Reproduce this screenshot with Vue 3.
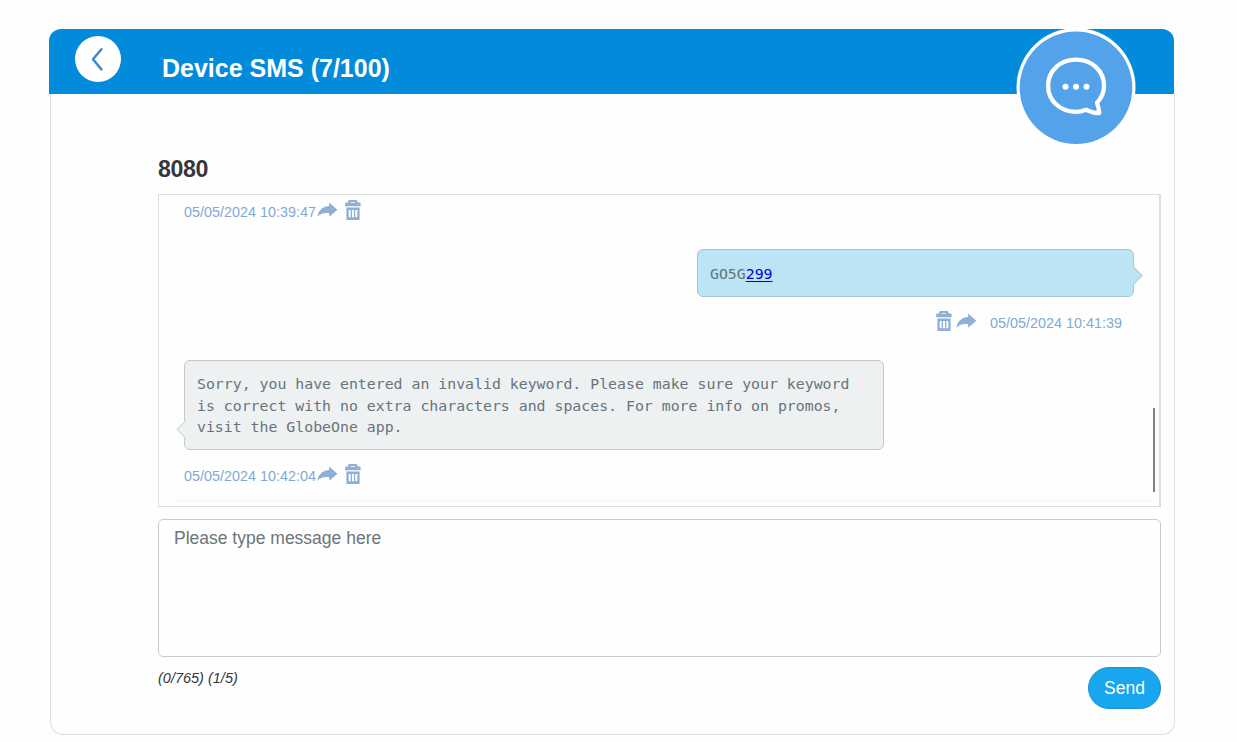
<script setup>
import { ref } from 'vue';

const title = 'Device SMS (7/100)';
const contact = '8080';
const draft = ref('');

const messages = ref([
  { id: 1, sent: false, text: '', date: '05/05/2024 10:39:47' },
  { id: 2, sent: true, text: 'GO5G', link: '299', date: '05/05/2024 10:41:39' },
  {
    id: 3,
    sent: false,
    text: 'Sorry, you have entered an invalid keyword. Please make sure your keyword is correct with no extra characters and spaces. For more info on promos, visit the GlobeOne app.',
    date: '05/05/2024 10:42:04'
  }
]);
</script>

<template>
  <div class="page">
    <header class="header">
      <button class="back" aria-label="Back">
        <svg width="45" height="45" viewBox="0 0 45 45">
          <path d="M25.4 12.2 L17 22.3 L25.4 32.4" fill="none" stroke="#3b8bd0" stroke-width="2.5" stroke-linecap="round" stroke-linejoin="round" />
        </svg>
      </button>
      <h1>{{ title }}</h1>
      <svg class="badge" width="120" height="118" viewBox="0 0 120 118">
        <circle cx="60" cy="59.5" r="59.5" fill="#fff" />
        <circle cx="60" cy="59.7" r="56.3" fill="#54a3ea" />
        <path
          d="M60 31.7 C44 31.7 32.1 43 32.1 57.7 C32.1 72.5 44 83.8 60 83.8 C63.5 83.8 66.5 83 70 81.7 C74.5 83.8 79 85.1 83.3 85.1 C83 81.5 82.2 78 81 74.7 C85.5 70 88 64.5 88 57.7 C88 43 76 31.7 60 31.7 Z"
          fill="none" stroke="#fff" stroke-width="4.3" stroke-linejoin="round"
        />
        <g fill="#fff">
          <circle cx="49.5" cy="58.7" r="3" />
          <circle cx="60" cy="58.7" r="3" />
          <circle cx="70.5" cy="58.7" r="3" />
        </g>
      </svg>
    </header>

    <main class="body">
      <h2>{{ contact }}</h2>

      <div class="history">
        <div v-for="m in messages" :key="m.id" class="message" :class="{ sent: m.sent }">
          <div v-if="m.text" class="bubble">{{ m.text }}<a v-if="m.link" href="#">{{ m.link }}</a></div>
          <div class="meta">
            <span class="date">{{ m.date }}</span>
            <svg class="forward" width="21" height="20" viewBox="0 0 21 20">
              <path d="M0.3 16.4 C1.8 10 6 6.3 12.2 6 V2.6 L20.4 9.7 L12.2 16.8 V13 C7.2 12.6 3.6 13.4 0.3 16.4 Z" fill="#8eb0d6" />
            </svg>
            <svg class="trash" width="16" height="20" viewBox="0 0 16 20">
              <path d="M3 2.6 V1.6 Q3 0 4.6 0 H11 Q12.6 0 12.6 1.6 V2.6 H14.9 Q15.6 2.6 15.6 3.4 V6.2 H0.2 V3.4 Q0.2 2.6 0.9 2.6 Z M5.6 2 V2.8 H10 V2 Z" fill="#8eb0d6" fill-rule="evenodd" />
              <path d="M1.4 7.6 H14.6 V20 H1.4 Z M3.7 10 V17.2 H5.7 V10 Z M7 10 V17.2 H9 V10 Z M10.3 10 V17.2 H12.3 V10 Z" fill="#8eb0d6" fill-rule="evenodd" />
            </svg>
          </div>
        </div>
        <hr>
        <span class="scrollbar"></span>
      </div>

      <textarea v-model="draft" placeholder="Please type message here"></textarea>

      <div class="footer">
        <em class="counter">({{ draft.length }}/765) (1/5)</em>
        <button class="send">Send</button>
      </div>
    </main>
  </div>
</template>

<style>
body { background: #fefefe; }
</style>

<style scoped>
* { box-sizing: border-box; }
.page { width: 1175px; height: 742px; padding: 29px 0 0 49px; font-family: "Liberation Sans", Arial, sans-serif; }

.header { position: relative; display: flex; align-items: flex-start; width: 1125px; height: 65px; padding: 7px 0 0 26px; background: #028adb; border-radius: 12px 12px 0 0; }
.back { display: block; width: 46px; height: 46px; padding: 0.5px; border: none; border-radius: 50%; background: #fff; cursor: pointer; }
.back svg { display: block; }
h1 { margin: 17px 0 0 41px; font-size: 25px; line-height: 30px; color: #fff; }
.badge { position: absolute; top: -1px; right: 38px; }

.body { width: 1125px; height: 641px; margin-left: 1px; padding: 60px 13px 0 107px; border: 1px solid #dcdedf; border-top: none; border-radius: 0 0 13px 13px; }
h2 { margin: 0 0 10px; font-size: 23.2px; line-height: 30px; letter-spacing: -0.4px; color: #37373b; }

/* Conversation */
.history { position: relative; height: 313px; padding: 5px 25px 0; border: 1px solid #dcdedf; border-right-width: 2px; overflow: hidden; }
.message { display: flex; flex-direction: column; align-items: flex-start; margin-bottom: 27px; }
.message.sent { align-items: flex-end; }
.bubble { position: relative; width: 700px; min-height: 48px; margin-bottom: 14px; padding: 13px 12px 10.5px; border: 1px solid #c4c8ca; border-radius: 6px; background: #edf1f2; color: #69737c; font-family: "DejaVu Sans Mono", "Liberation Mono", monospace; font-size: 14.85px; line-height: 21.5px; }
.sent .bubble { width: 437px; padding-top: 14px; padding-bottom: 9.5px; border-color: #a8c5d6; background: #bbe5f4; }
.bubble::before { content: ""; position: absolute; left: -6.5px; bottom: 13.5px; width: 12px; height: 12px; border: 1px solid #d3d8d9; border-width: 0 0 1px 1px; background: #edf1f2; transform: rotate(45deg); }
.sent .bubble::before { left: auto; right: -6.5px; bottom: 14px; border-color: #a9cfdf; border-width: 1px 1px 0 0; background: #bbe5f4; }
.bubble a { color: #0000e0; text-underline-offset: 2px; }
.meta { display: flex; align-items: flex-start; height: 22px; color: #82aad4; }
.date { font-size: 14.4px; line-height: 24px; }
.forward { margin-left: 1px; }
.trash { margin-left: 7px; }
.sent .meta { flex-direction: row-reverse; margin-right: 12px; }
.sent .forward { margin: 0 13px 0 4px; }
.sent .trash { margin: 0; }
hr { height: 2px; margin: -13px -23px 0 -12px; border: none; background: #f8f9f9; }
.scrollbar { position: absolute; right: 4px; top: 213px; width: 2px; height: 84px; background: #857d80; }

textarea { display: block; width: 100%; height: 138px; margin-top: 12px; padding: 8px 15px; border: 1px solid #c8cbcd; border-radius: 5px; background: transparent; resize: none; outline: none; color: #495057; font-family: inherit; font-size: 17.5px; line-height: 21px; }
textarea::placeholder { color: #6c757d; opacity: 1; }

.footer { display: flex; justify-content: space-between; align-items: flex-start; margin-top: 10px; }
.counter { font-size: 14.5px; line-height: 22px; color: #37373b; }
.send { width: 73px; height: 42px; padding: 0; border: 1px solid #1c93d8; border-radius: 21px; background: #18a7ee; color: #fff; font-family: inherit; font-size: 17.5px; cursor: pointer; }
</style>
